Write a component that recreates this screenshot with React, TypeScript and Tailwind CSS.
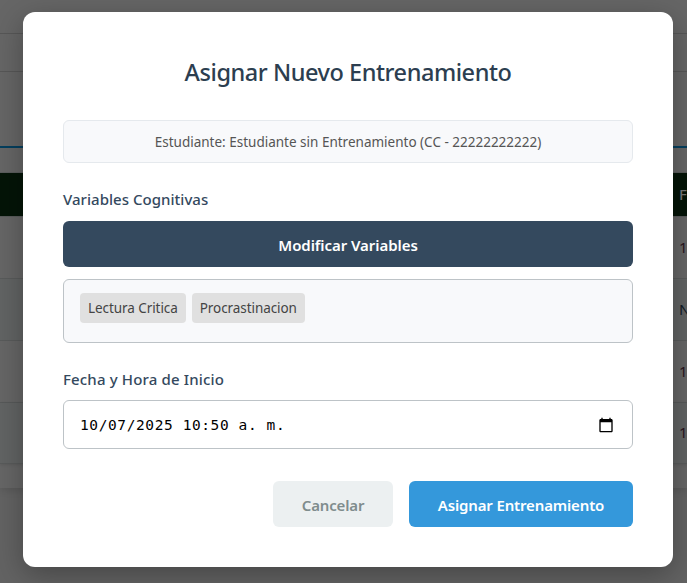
import type { ReactNode } from "react";

const tags = ["Lectura Critica", "Procrastinacion"];

function Row({ className, children }: { className: string; children?: ReactNode }) {
  return (
    <div className={`flex items-center justify-end pb-0.5 ${className}`}>
      <div className="w-2 whitespace-nowrap">{children}</div>
    </div>
  );
}

function Backdrop() {
  return (
    <div className="col-start-1 row-start-1 flex h-[583px] flex-col overflow-hidden bg-[#636363] text-[15px] leading-5">
      <div className="flex h-[488px] shrink-0 flex-col bg-[#666666] shadow-[0_2px_8px_rgba(0,0,0,0.12)]">
        <div className="h-[34px] shrink-0 border-b border-[#575757]" />
        <div className="h-[38px] shrink-0 border-b border-[#575757]" />
        <div className="h-[76px] shrink-0 border-b-2 border-[#043f5e]" />
        <div className="h-[25px] shrink-0 border-b border-[#5b5d5d]" />
        <Row className="h-[43px] shrink-0 bg-[#041407] font-medium text-[#777777]">F</Row>
        <Row className="h-[63px] shrink-0 border-y border-[#595b5b] text-[#2a1520]">1</Row>
        <Row className="h-[62px] shrink-0 border-b border-[#595b5b] bg-[#626464] text-[#131c28]">N</Row>
        <Row className="h-[62px] shrink-0 border-b border-[#595b5b] text-[#2a1520]">1</Row>
        <Row className="h-[61px] shrink-0 border-b border-[#595b5b] bg-[#626464] text-[#2a1520] shadow-[0_1px_3px_rgba(0,0,0,0.1)]">1</Row>
      </div>
    </div>
  );
}

function Calendar() {
  return (
    <svg width="16" height="16" viewBox="0 0 24 24" className="text-black">
      <path
        fill="currentColor"
        d="M20 3h-1V1h-2v2H7V1H5v2H4c-1.1 0-2 .9-2 2v16c0 1.1.9 2 2 2h16c1.1 0 2-.9 2-2V5c0-1.1-.9-2-2-2zm0 18H4V8h16v13z"
      />
    </svg>
  );
}

export default function App() {
  return (
    <div className="grid h-[583px] w-[687px] overflow-hidden font-['Noto_Sans','Open_Sans',sans-serif]">
      <Backdrop />
      <div className="z-10 col-start-1 row-start-1 mt-3 ml-[23px] flex h-[555px] w-[650px] flex-col rounded-xl bg-white p-10 shadow-[0_8px_30px_rgba(0,0,0,0.3)]">
        <h2 className="h-[68px] text-center text-[23.5px] leading-10 font-medium tracking-[-0.45px] text-[#2c3e50]">
          Asignar Nuevo Entrenamiento
        </h2>
        <div className="flex h-[43px] items-center justify-center rounded-md border border-[#e5e9ed] bg-[#f8f9fb] pt-0.5 text-[13.5px] text-[#555555]">
          <span>Estudiante: Estudiante sin Entrenamiento (CC - 22222222222)</span>
        </div>
        <div className="mt-6 h-[34px] text-[15px] leading-6 font-medium tracking-[0.03px] text-[#34495e]">
          Variables Cognitivas
        </div>
        <button className="h-[46px] rounded-md bg-[#34495e] pt-0.5 text-[15px] font-semibold tracking-[-0.06px] text-white">
          Modificar Variables
        </button>
        <div className="mt-3 flex h-16 items-start gap-1.5 rounded-md border border-[#bdc3c7] bg-[#f8f9fb] px-4 pt-[13px] text-[13.5px] tracking-[-0.07px] text-[#444444]">
          {tags.map((tag) => (
            <span key={tag} className="flex h-[30px] items-center rounded bg-[#e0e0e0] px-2">
              {tag}
            </span>
          ))}
        </div>
        <div className="mt-6 h-[33px] text-[15px] leading-6 font-medium tracking-[0.15px] text-[#34495e]">
          Fecha y Hora de Inicio
        </div>
        <div className="flex h-[49px] items-center justify-between rounded-md border border-[#bdc3c7] pr-[18px] pl-4 font-['DejaVu_Sans_Mono',monospace] text-[14.5px] tracking-[0.6px] text-black">
          <span className="pt-0.5">10/07/2025 10:50 a. m.</span>
          <Calendar />
        </div>
        <div className="mt-8 flex h-[46px] justify-end gap-4 text-[15px] font-semibold tracking-[-0.15px]">
          <button className="w-[120px] rounded-md bg-[#ecf0f1] pt-0.5 text-[#7f8c8d]">Cancelar</button>
          <button className="w-56 rounded-md bg-[#3498db] pt-0.5 text-white">Asignar Entrenamiento</button>
        </div>
      </div>
    </div>
  );
}
